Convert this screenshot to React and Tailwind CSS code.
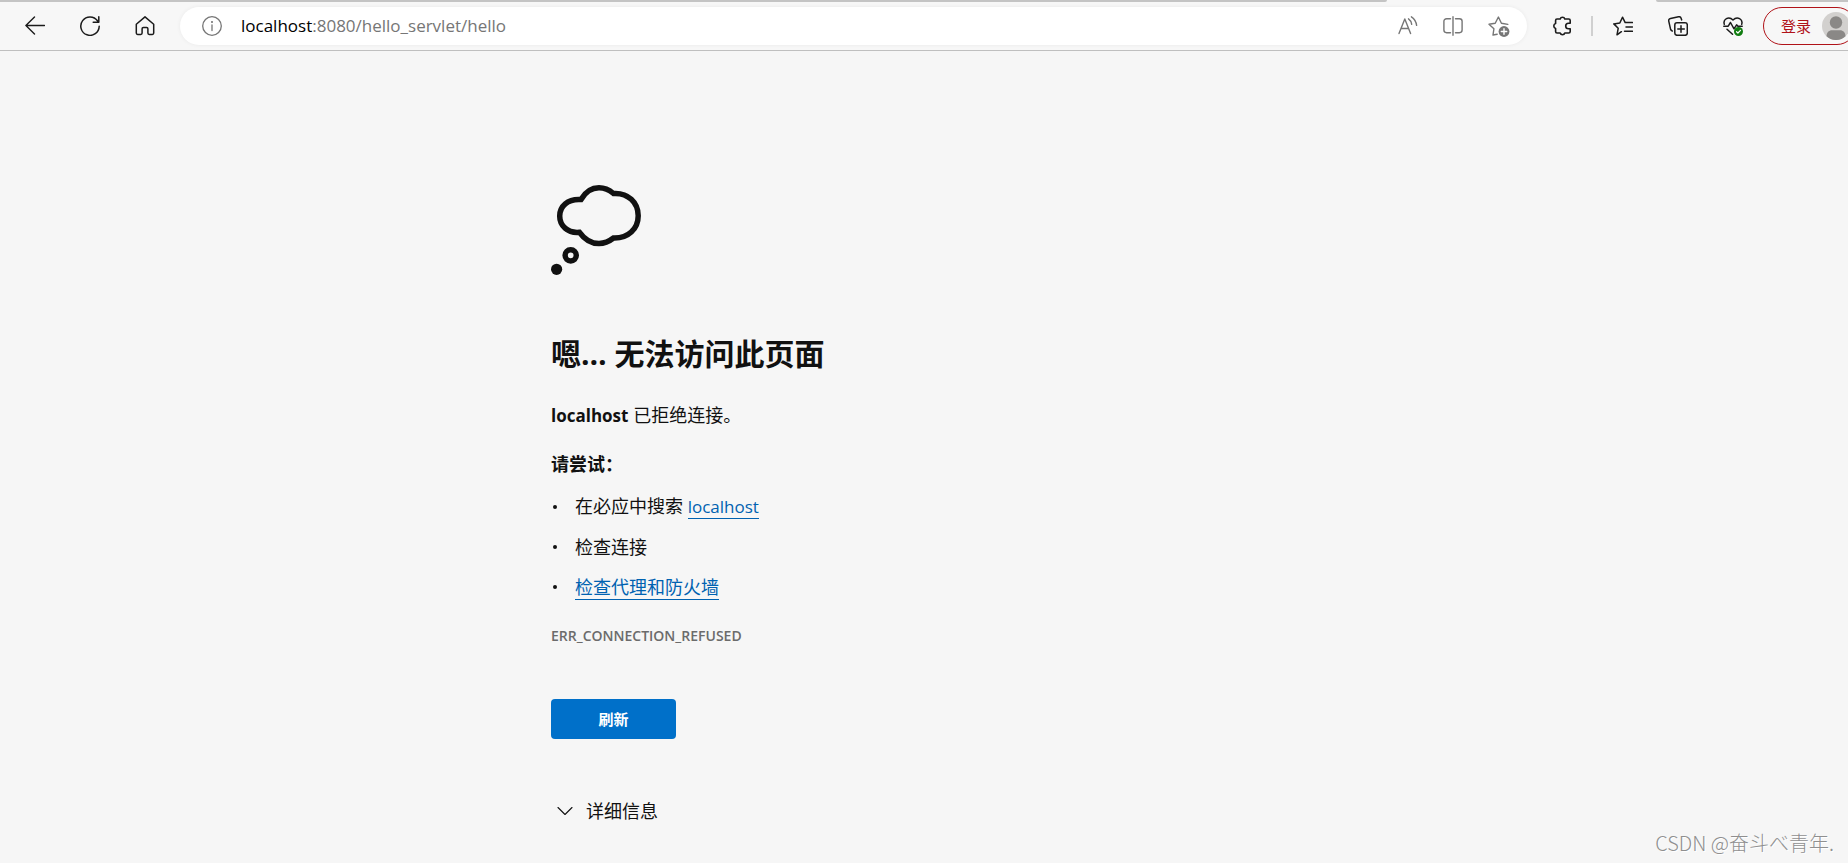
import React from 'react';

function Icon({ children, className = '', size = 20, stroke = 1.3, viewBox = '0 0 20 20' }) {
  return (
    <svg
      aria-hidden="true"
      width={size}
      height={size}
      viewBox={viewBox}
      fill="none"
      stroke="currentColor"
      strokeWidth={stroke}
      strokeLinecap="round"
      strokeLinejoin="round"
      className={`shrink-0 ${className}`}
    >
      {children}
    </svg>
  );
}

function TabStrip() {
  return (
    <div className="flex h-[2px] bg-[#f7f7f7]">
      <div className="flex-[1387] rounded-br-sm bg-[#c4c4c4]" />
      <div className="flex-[269]" />
      <div className="flex-[192] rounded-bl-sm bg-[#c4c4c4]" />
    </div>
  );
}

function AddressBar() {
  return (
    <div className="ml-[25px] flex h-[38px] flex-1 items-center rounded-full bg-white pl-[22px] pr-[17px] text-[#767676] shadow-[0_0_4px_rgba(0,0,0,0.06)]">
      <button type="button" aria-label="查看站点信息">
        <Icon stroke={1.3}>
          <circle cx="10" cy="10" r="9.3" />
          <path d="M10 9v5.5" />
          <circle cx="10" cy="6" r="0.6" fill="currentColor" stroke="none" />
          <circle cx="10" cy="6" r="0.4" />
        </Icon>
      </button>
      <div className="ml-[19px] flex-1 text-[17px] leading-6">
        <span className="text-black">localhost</span>:8080/hello_servlet/hello
      </div>
      <div className="flex items-center gap-[25px]">
        <button type="button" aria-label="大声朗读">
          <Icon stroke={1.4}>
            <path d="M1 17.500L6.800 3L12.600 17.500M3 12.500h7.600M10.500 2.800c1.600 1.100 2.800 3 3.200 5.500M13.400.8c2.600 1.700 4.800 4.800 5.200 8.600" />
          </Icon>
        </button>
        <button type="button" aria-label="分屏">
          <Icon stroke={1.4}>
            <path d="M10 .7v18.600M7.500 2.700H3.600C2 2.700.9 3.700.9 5.300v8.800c0 1.600 1.100 2.600 2.700 2.600H7.500M12.500 2.700h3.900c1.600 0 2.700 1 2.700 2.600v8.800c0 1.600-1.100 2.600-2.700 2.600H12.500" />
          </Icon>
        </button>
        <button type="button" aria-label="收藏此页面">
          <Icon size={22} stroke={1.4} viewBox="0 0 22 22">
            <path d="M9.200 19.200L5 20l.9-6.200L1 9.200l6.200-1L10.400 2l3 6.200 6.400 1.200" />
            <circle cx="16" cy="16.500" r="5.400" fill="currentColor" stroke="none" />
            <path d="M16 13.800v5.400M13.300 16.500h5.400" stroke="white" />
          </Icon>
        </button>
      </div>
    </div>
  );
}

function Toolbar() {
  return (
    <header className="flex h-[49px] items-center overflow-hidden border-b border-[#bfbfbf] bg-[#f7f7f7] pl-[25px] text-[#1b1b1b]">
      <nav className="flex items-center gap-[35px]">
        <button type="button" aria-label="返回">
          <Icon stroke={1.4}>
            <path d="M19.500 9.500H.9M9.500 1L.9 9.500l8.600 8.500" />
          </Icon>
        </button>
        <button type="button" aria-label="刷新页面">
          <Icon stroke={1.5}>
            <path d="M19.200 10.300A9.200 9.200 0 1 1 17.500 4.800M18.800.8v5.400h-5.600" />
          </Icon>
        </button>
        <button type="button" aria-label="主页">
          <Icon stroke={1.5}>
            <path d="M1.300 8.300L10 .9l8.700 7.400v8.800c0 .8-.5 1.300-1.300 1.300h-3.200c-.8 0-1.300-.5-1.300-1.300v-4.300c0-.8-.5-1.300-1.300-1.300H8.400c-.8 0-1.300.5-1.300 1.300v4.300c0 .8-.5 1.300-1.300 1.300H2.600c-.8 0-1.300-.5-1.300-1.300z" />
          </Icon>
        </button>
      </nav>
      <AddressBar />
      <button type="button" aria-label="扩展" className="ml-[25px]">
        <Icon stroke={1.6}>
          <path d="M3.600 4.400c0-.9.500-1.400 1.400-1.400h3.200a2.400 2.400 0 0 1 4.600 0h4c.9 0 1.400.5 1.400 1.400v2.800h-1.700a2.800 2.800 0 0 0 0 5.600h1.700v2.800c0 .9-.5 1.400-1.400 1.400h-4a2.400 2.400 0 0 1-4.600 0H5c-.9 0-1.400-.5-1.400-1.400v-3.200a2.500 2.500 0 0 1 0-4.800z" />
        </Icon>
      </button>
      <div className="ml-[19px] h-5 w-[2px] bg-[#d0d0d0]" />
      <div className="ml-5 flex items-center gap-[35px]">
        <button type="button" aria-label="收藏夹">
          <Icon stroke={1.5}>
            <path d="M8.400 15.700L4 18.800l1.200-6.500L.8 7.900l6-.9L9.500 1.200 12.200 6.600H19.500M13 11h6.500M11.500 15.300h8" />
          </Icon>
        </button>
        <button type="button" aria-label="集锦">
          <Icon stroke={1.5}>
            <rect x="6.800" y="6.800" width="12.500" height="12.500" rx="2.200" />
            <path d="M13 9.800v6.500M9.800 13h6.500M4.300 15c-.9-.2-1.400-.7-1.700-1.700L.8 5.300c-.3-1.400.3-2.500 1.700-2.800l8-1.700c1.300-.3 2.200.3 2.600 1.400l.6 1.700" />
          </Icon>
        </button>
        <button type="button" aria-label="浏览器概要">
          <Icon stroke={1.5}>
            <path d="M1.300 8.200C-.2 3.500 5.500-.5 10 4c4.500-4.500 10.200-.5 8.700 4.200M.8 10.200h4.400l2.300-3.700 3.500 6.300 2.600-4 1.300 1.400h4.300M4 13.200l5.500 5" />
            <circle cx="15.500" cy="15.500" r="4.500" fill="#107c10" stroke="none" />
            <path d="M13.500 15.700l1.400 1.300 2.600-2.700" stroke="white" strokeWidth="1.200" />
          </Icon>
        </button>
      </div>
      <button
        type="button"
        className="-mr-2 ml-5 flex h-[38px] items-center rounded-full border border-[#b01218] pl-[17px] pr-[5px] text-[15px] text-[#b01218]"
      >
        登录
        <svg aria-hidden="true" width="28" height="28" viewBox="0 0 28 28" className="ml-[11px] shrink-0">
          <circle cx="14" cy="14" r="14" fill="#d2d0ce" />
          <circle cx="14" cy="10.500" r="6.200" fill="#8a8886" />
          <path d="M4.500 24.300c0-3.800 2.400-6 5.500-6h8c3.100 0 5.500 2.200 5.500 6a14 14 0 0 1-19 0z" fill="#8a8886" />
        </svg>
      </button>
    </header>
  );
}

function ThoughtBubble() {
  return (
    <svg aria-hidden="true" width="92" height="92" viewBox="0 0 92 92" fill="none">
      <path
        d="M30 14.500C35 6 41.500 2.800 48 2.800c5.500 0 10 2 14.500 5.700C77 7.500 87.200 17.500 87.200 30.700S77 53.500 62.500 53c-4.500 3.500-9 5.500-14.500 5.500-7.500 0-14-3.500-19.500-11.200C16.500 48.500 8.700 40.500 8.700 31S16.500 13.500 30 14.500z"
        stroke="#111"
        strokeWidth="5.500"
      />
      <circle cx="19.700" cy="70.300" r="5.600" stroke="#111" strokeWidth="5.500" />
      <circle cx="5.600" cy="84.300" r="5.600" fill="#111" />
    </svg>
  );
}

const linkClass = 'border-b border-[#0062b1] text-[#0062b1]';

function Suggestion({ children }) {
  return (
    <li className="flex items-center">
      <span aria-hidden="true" className="ml-[2px] mr-[18px] size-1 rounded-full bg-[#111]" />
      <span className="leading-5">{children}</span>
    </li>
  );
}

function ErrorPage() {
  return (
    <main className="mx-auto w-full max-w-[746px] pt-[134px] text-[18px] leading-6 text-[#111]">
      <ThoughtBubble />
      <h1 className="mt-[57px] text-[30px] font-bold leading-10">嗯… 无法访问此页面</h1>
      <p className="mt-[29px]">
        <strong className="text-[17px] font-bold">localhost</strong> 已拒绝连接。
      </p>
      <h2 className="mt-6 text-[18px] font-bold">请尝试：</h2>
      <ul className="mt-5 flex flex-col gap-5">
        <Suggestion>
          在必应中搜索 <a href="#search" className={`text-[17px] ${linkClass}`}>localhost</a>
        </Suggestion>
        <Suggestion>检查连接</Suggestion>
        <Suggestion>
          <a href="#proxy" className={linkClass}>检查代理和防火墙</a>
        </Suggestion>
      </ul>
      <p className="mt-[27px] text-[14px] font-semibold text-[#6b6b6b]">ERR_CONNECTION_REFUSED</p>
      <button
        type="button"
        className="mt-[51px] flex h-10 w-[125px] items-center justify-center rounded-sm bg-[#0070c9] text-[15px] font-bold text-white"
      >
        刷新
      </button>
      <button type="button" aria-expanded="false" className="mt-[60px] flex items-center pl-[6px]">
        <Icon size={16} stroke={1.1} viewBox="0 0 16 16">
          <path d="M1 4.500l7 7 7-7" />
        </Icon>
        <span className="ml-[13px]">详细信息</span>
      </button>
    </main>
  );
}

export default function App() {
  return (
    <div className="relative min-h-screen bg-[#f6f6f6] font-['Open_Sans','Noto_Sans_CJK_SC',sans-serif]">
      <TabStrip />
      <Toolbar />
      <ErrorPage />
      <div className="absolute bottom-[6px] right-[14px] font-['Noto_Sans_CJK_SC',sans-serif] text-[20px] font-light leading-7 text-[#8f8f8f] [text-shadow:1px_1px_0_white]">
        CSDN @奋斗べ青年.
      </div>
    </div>
  );
}
